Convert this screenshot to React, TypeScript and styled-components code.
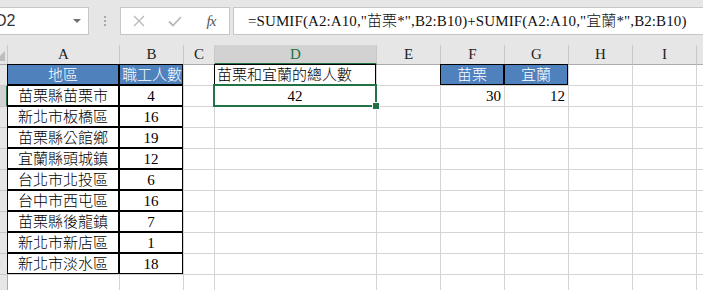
import styled, { createGlobalStyle, css } from "styled-components"

const GlobalStyle = createGlobalStyle`
  body {
    margin: 0;
    background: #fff;
    overflow: hidden;
  }
`

const green = "#217346"
const cellFont = `"Liberation Serif", "Noto Sans CJK TC", serif`

const Window = styled.div`
  width: 703px;
  height: 290px;
  overflow: hidden;
  background: #fff;
`

const Toolbar = styled.div`
  display: flex;
  align-items: flex-start;
  height: 45px;
  box-sizing: border-box;
  padding-top: 7px;
  margin-left: -12px;
  margin-right: -12px;
  background: #e6e6e6;
`

const NameBox = styled.div`
  display: flex;
  align-items: center;
  justify-content: space-between;
  width: 101px;
  height: 28px;
  box-sizing: border-box;
  padding: 0 7px 0 6px;
  background: #fff;
  border: 1px solid #c6c6c6;
  font: 16px "Liberation Sans", Arial, sans-serif;
  color: #333;
`

const Caret = styled.span`
  width: 0;
  height: 0;
  border-left: 4px solid transparent;
  border-right: 4px solid transparent;
  border-top: 4px solid #707070;
`

const Grip = styled.div`
  display: flex;
  flex-direction: column;
  align-items: center;
  justify-content: center;
  gap: 2px;
  width: 31px;
  height: 28px;
  span {
    width: 2px;
    height: 2px;
    background: #a8a8a8;
  }
`

const FuncButtons = styled.div`
  display: flex;
  width: 110px;
  height: 28px;
  box-sizing: border-box;
  background: #fff;
  border: 1px solid #c6c6c6;
`

const FuncButton = styled.div`
  display: flex;
  align-items: center;
  justify-content: center;
  width: 36px;
  height: 100%;
`

const Fx = styled.span`
  font: italic 15px "Liberation Serif", serif;
  color: #555;
  letter-spacing: -1px;
`

const FormulaBar = styled.div`
  flex: 1;
  height: 28px;
  margin-left: 3px;
  box-sizing: border-box;
  padding-left: 14px;
  background: #fff;
  border: 1px solid #c6c6c6;
  font: 15px ${cellFont};
  font-weight: 300;
  line-height: 26px;
  letter-spacing: 0.1px;
  color: #111;
  white-space: nowrap;
`

const Sheet = styled.div`
  display: grid;
  grid-template-columns: 30px 112px 64px 31px 162px 64px 64px 64px 64px 64px 64px;
  grid-template-rows: 20px repeat(11, 21px);
  margin-left: -22px;
`

const Corner = styled.div`
  position: relative;
  background: #e6e6e6;
  border-right: 1px solid #c8c8c8;
  border-bottom: 1px solid #ababab;
  &::after {
    content: "";
    position: absolute;
    right: 2px;
    bottom: 3px;
    border-left: 10px solid transparent;
    border-bottom: 10px solid #bdbdbd;
  }
`

const ColHeader = styled.div<{ $selected?: boolean }>`
  box-sizing: border-box;
  background: #e6e6e6;
  border-right: 1px solid #c8c8c8;
  border-bottom: 1px solid #ababab;
  font: 15px ${cellFont};
  line-height: 19px;
  text-align: center;
  color: #222;
  ${(p) =>
    p.$selected &&
    css`
      background: #d2d2d2;
      color: ${green};
      border-bottom: 2px solid ${green};
    `}
`

const RowHeader = styled.div<{ $selected?: boolean }>`
  box-sizing: border-box;
  background: #e6e6e6;
  border-right: 1px solid #ababab;
  border-bottom: 1px solid #c8c8c8;
  font: 14px "Liberation Sans", Arial, sans-serif;
  line-height: 20px;
  text-align: center;
  color: #333;
  ${(p) =>
    p.$selected &&
    css`
      background: #d2d2d2;
      border-right: 2px solid ${green};
    `}
`

type Align = "left" | "center" | "right"

const Cell = styled.div<{ $align?: Align; $head?: boolean; $boxed?: boolean; $active?: boolean }>`
  position: relative;
  box-sizing: border-box;
  padding: 0 3px 0 2px;
  border-right: 1px solid #d4d4d4;
  border-bottom: 1px solid #d4d4d4;
  font: 15px ${cellFont};
  font-weight: 300;
  line-height: 20px;
  color: #000;
  white-space: nowrap;
  text-align: ${(p) => p.$align ?? "left"};
  ${(p) =>
    p.$head &&
    css`
      background: #4f81bd;
      color: #fff;
    `}
  ${(p) =>
    p.$boxed &&
    css`
      &::before {
        content: "";
        position: absolute;
        top: -1px;
        left: -1px;
        right: 0;
        bottom: 0;
        border: 1px solid #000;
        pointer-events: none;
      }
    `}
  ${(p) =>
    p.$active &&
    css`
      z-index: 2;
      &::after {
        content: "";
        position: absolute;
        top: -2px;
        left: -2px;
        right: -1px;
        bottom: -1px;
        border: 2px solid ${green};
        pointer-events: none;
      }
    `}
`

const FillHandle = styled.span`
  position: absolute;
  right: -4px;
  bottom: -4px;
  width: 6px;
  height: 6px;
  background: ${green};
  border: 1px solid #fff;
  z-index: 3;
`

type CellData = { v: string; align?: Align; head?: boolean; boxed?: boolean; active?: boolean }

const columns = ["A", "B", "C", "D", "E", "F", "G", "H", "I", "J"]

const places: [string, string][] = [
  ["苗栗縣苗栗市", "4"],
  ["新北市板橋區", "16"],
  ["苗栗縣公館鄉", "19"],
  ["宜蘭縣頭城鎮", "12"],
  ["台北市北投區", "6"],
  ["台中市西屯區", "16"],
  ["苗栗縣後龍鎮", "7"],
  ["新北市新店區", "1"],
  ["新北市淡水區", "18"],
]

const empty: CellData = { v: "" }

const buildRows = (): CellData[][] => {
  const rows: CellData[][] = []
  rows.push([
    { v: "地區", align: "center", head: true, boxed: true },
    { v: "職工人數", align: "center", head: true, boxed: true },
    empty,
    { v: "苗栗和宜蘭的總人數", boxed: true },
    empty,
    { v: "苗栗", align: "center", head: true, boxed: true },
    { v: "宜蘭", align: "center", head: true, boxed: true },
    empty,
    empty,
    empty,
  ])
  places.forEach(([place, count], i) => {
    const row: CellData[] = [
      { v: place, align: "center", boxed: true },
      { v: count, align: "center", boxed: true },
    ]
    for (let c = 2; c < 10; c++) row.push(empty)
    if (i === 0) {
      row[3] = { v: "42", align: "center", active: true }
      row[5] = { v: "30", align: "right" }
      row[6] = { v: "12", align: "right" }
    }
    rows.push(row)
  })
  rows.push(columns.map(() => empty))
  return rows
}

const CloseIcon = () => (
  <svg width="12" height="12" viewBox="0 0 12 12">
    <path d="M1 1L11 11M11 1L1 11" stroke="#b8b8b8" strokeWidth="1.3" fill="none" />
  </svg>
)

const CheckIcon = () => (
  <svg width="14" height="11" viewBox="0 0 14 11">
    <path d="M1 5.5L5 9.5L13 1" stroke="#b8b8b8" strokeWidth="1.8" fill="none" />
  </svg>
)

const App = () => {
  const rows = buildRows()
  return (
    <Window>
      <GlobalStyle />
      <Toolbar>
        <NameBox>
          <span>D2</span>
          <Caret />
        </NameBox>
        <Grip>
          <span />
          <span />
          <span />
        </Grip>
        <FuncButtons>
          <FuncButton>
            <CloseIcon />
          </FuncButton>
          <FuncButton>
            <CheckIcon />
          </FuncButton>
          <FuncButton>
            <Fx>fx</Fx>
          </FuncButton>
        </FuncButtons>
        <FormulaBar>=SUMIF(A2:A10,"苗栗*",B2:B10)+SUMIF(A2:A10,"宜蘭*",B2:B10)</FormulaBar>
      </Toolbar>
      <Sheet>
        <Corner />
        {columns.map((c) => (
          <ColHeader key={c} $selected={c === "D"}>
            {c}
          </ColHeader>
        ))}
        {rows.map((row, r) => [
          <RowHeader key={`h${r}`} $selected={r === 1}>
            {r + 1}
          </RowHeader>,
          ...row.map((cell, c) => (
            <Cell
              key={`${r}-${c}`}
              $align={cell.align}
              $head={cell.head}
              $boxed={cell.boxed}
              $active={cell.active}
            >
              {cell.v}
              {cell.active && <FillHandle />}
            </Cell>
          )),
        ])}
      </Sheet>
    </Window>
  )
}

export default App
